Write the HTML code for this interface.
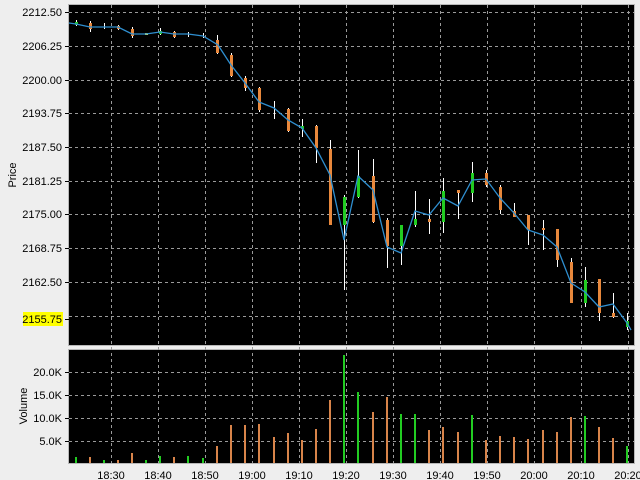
<!DOCTYPE html><html><head><style>body{margin:0;background:#eeeeee}svg{display:block}text{font-family:"Liberation Sans",sans-serif;font-size:11px;fill:#000}</style></head><body>
<svg width="640" height="480" xmlns="http://www.w3.org/2000/svg">
<rect width="640" height="480" fill="#eeeeee"/>
<rect x="68.5" y="4.5" width="566" height="341" fill="#000" stroke="#b8b8b8"/>
<rect x="68.5" y="349.5" width="566" height="114" fill="#000" stroke="#b8b8b8"/>
<g stroke="#9a9a9a" stroke-dasharray="3,3" stroke-width="1">
<path d="M69 12.5H634M69 46.5H634M69 80.5H634M69 113.5H634M69 147.5H634M69 181.5H634M69 214.5H634M69 248.5H634M69 282.5H634M69 316.5H634"/>
<path d="M69 372.5H634M69 395.5H634M69 418.5H634M69 441.5H634"/>
<path d="M111.5 5V463M158.5 5V463M205.5 5V463M252.5 5V463M299.5 5V463M346.5 5V463M393.5 5V463M440.5 5V463M487.5 5V463M534.5 5V463M581.5 5V463M628.5 5V463"/>
</g>
<g stroke="#000" stroke-width="1"><path d="M65 12.5h4M65 46.5h4M65 80.5h4M65 113.5h4M65 147.5h4M65 181.5h4M65 214.5h4M65 248.5h4M65 282.5h4M65 319.5h4M65 372.5h4M65 395.5h4M65 418.5h4M65 441.5h4"/></g>
<g text-anchor="end">
<text x="62" y="16">2212.50</text><text x="62" y="50">2206.25</text><text x="62" y="84">2200.00</text><text x="62" y="117">2193.75</text><text x="62" y="151">2187.50</text><text x="62" y="185">2181.25</text><text x="62" y="218">2175.00</text><text x="62" y="252">2168.75</text><text x="62" y="286">2162.50</text>
<rect x="23" y="312" width="40" height="14" fill="#ffff00"/>
<text x="62" y="323">2155.75</text>
<text x="62" y="376">20.0K</text><text x="62" y="399">15.0K</text><text x="62" y="422">10.0K</text><text x="62" y="445">5.0K</text>
</g>
<text transform="translate(16,175) rotate(-90)" text-anchor="middle" font-size="12">Price</text>
<text transform="translate(27,406) rotate(-90)" text-anchor="middle" font-size="12">Volume</text>
<g text-anchor="middle"><text x="111" y="479">18:30</text><text x="158" y="479">18:40</text><text x="205" y="479">18:50</text><text x="252" y="479">19:00</text><text x="299" y="479">19:10</text><text x="346" y="479">19:20</text><text x="393" y="479">19:30</text><text x="440" y="479">19:40</text><text x="487" y="479">19:50</text><text x="534" y="479">20:00</text><text x="581" y="479">20:10</text><text x="628" y="479">20:20</text></g>
<g stroke="#fff" stroke-width="1">
<path d="M76.5 20V26M90.5 21V32M104.5 23V29M118.5 25V30M132.5 27V38M160.5 28V35M174.5 31V38M188.5 32V37M203.5 33V38M217.5 35V54M231.5 53V77M245.5 76V91M259.5 87V112M274.5 101V119M288.5 108V132M302.5 119V137M316.5 125V163M330.5 140V225M344.5 195V290M358.5 150V198M373.5 159V223M387.5 218V268M401.5 225V265M415.5 191V227M429.5 199V234M443.5 178V233M458.5 190V219M472.5 162V202M486.5 170V187M500.5 185V214M514.5 203V217M528.5 215V245M543.5 220V250M557.5 229V267M571.5 258V303M585.5 267V307M599.5 279V321M613.5 293V318M627.5 313V330"/>
</g>
<g fill="#e8883c">
<rect x="89" y="23" width="3" height="6"/><rect x="117" y="26" width="3" height="3"/><rect x="131" y="29" width="3" height="7"/><rect x="173" y="32" width="3" height="5"/><rect x="216" y="40" width="3" height="13"/><rect x="230" y="55" width="3" height="21"/><rect x="244" y="78" width="3" height="10"/><rect x="258" y="88" width="3" height="22"/><rect x="287" y="109" width="3" height="22"/><rect x="315" y="126" width="3" height="22"/><rect x="329" y="149" width="3" height="76"/><rect x="372" y="176" width="3" height="46"/><rect x="386" y="220" width="3" height="26"/><rect x="428" y="219" width="3" height="3"/><rect x="457" y="190" width="3" height="3"/><rect x="485" y="173" width="3" height="12"/><rect x="499" y="187" width="3" height="23"/><rect x="513" y="211" width="3" height="6"/><rect x="527" y="215" width="3" height="15"/><rect x="542" y="228" width="3" height="2"/><rect x="556" y="229" width="3" height="31"/><rect x="570" y="262" width="3" height="41"/><rect x="598" y="279" width="3" height="34"/><rect x="612" y="313" width="3" height="4"/>
</g>
<g fill="#22cc22">
<rect x="75" y="22" width="3" height="3"/><rect x="159" y="31" width="3" height="3"/><rect x="301" y="126" width="3" height="3"/><rect x="343" y="197" width="3" height="28"/><rect x="357" y="176" width="3" height="21"/><rect x="400" y="225" width="3" height="21"/><rect x="414" y="219" width="3" height="6"/><rect x="442" y="191" width="3" height="31"/><rect x="471" y="173" width="3" height="20"/><rect x="584" y="280" width="3" height="23"/><rect x="626" y="321" width="3" height="6"/>
</g>
<rect x="145" y="33" width="3" height="2" fill="#ffff44"/>
<polyline fill="none" stroke="#2f8fd0" stroke-width="1.3" points="69,23 76,24 90,27 104,27 118,27 132,34 146,34 160,32 174,34 188,34 203,36 218,45 231,65 245,83 259,102 274,108 288,120 302,128 316,148 330,175 344,240 358,176 373,190 387,247 401,253 415,211 429,215 443,198 458,206 472,180 486,179 500,198 514,213 528,230 543,235 557,247 571,283 585,292 599,307 613,304 627,323 631,330"/>
<g stroke-width="2">
<path stroke="#22cc22" d="M76 463V457M104 463V460M146 463V460M160 463V456M188 463V456M203 463V458M344 463V355M358 463V392M401 463V414M415 463V414M472 463V415M585 463V416M627 463V446"/>
<path stroke="#d8844a" d="M90 463V457M118 463V460M132 463V453M174 463V457M217 463V446M231 463V425M245 463V425M259 463V424M274 463V437M288 463V433M302 463V440M316 463V429M330 463V400M373 463V412M387 463V397M429 463V430M443 463V427M458 463V432M486 463V440M500 463V436M514 463V437M528 463V439M543 463V430M557 463V432M571 463V417M599 463V427M613 463V438"/>
</g>
</svg>
</body></html>
